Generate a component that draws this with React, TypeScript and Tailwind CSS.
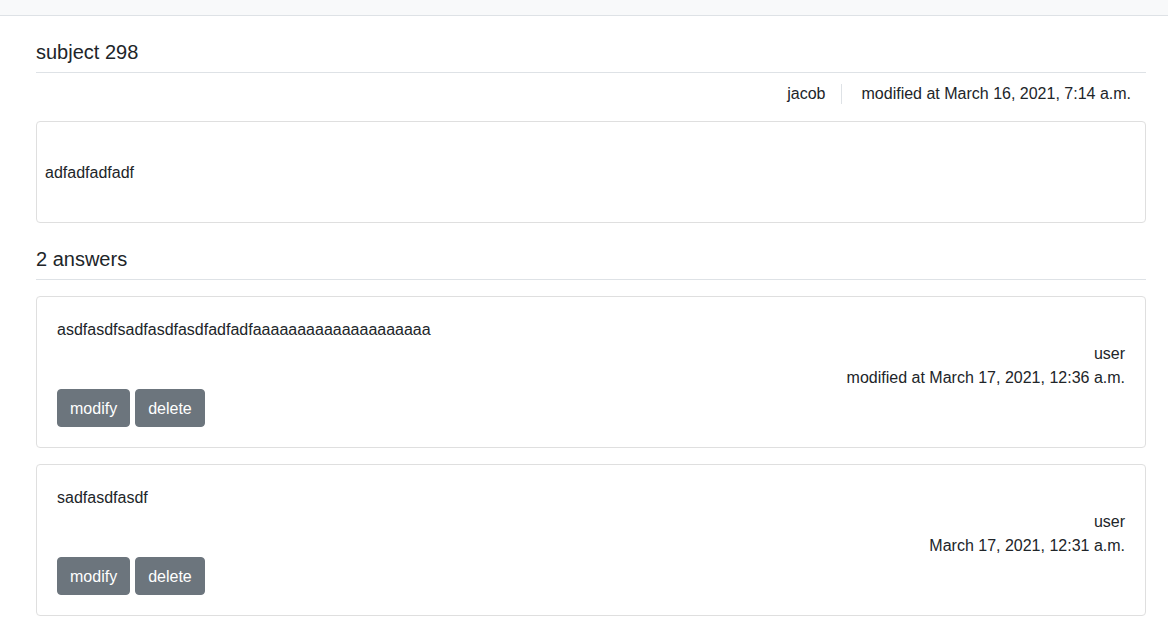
export default function App() {
  const answers = [
    { text: "asdfasdfsadfasdfasdfadfadfaaaaaaaaaaaaaaaaaaaa", user: "user", date: "modified at March 17, 2021, 12:36 a.m." },
    { text: "sadfasdfasdf", user: "user", date: "March 17, 2021, 12:31 a.m." },
  ];
  return (
    <div className="min-h-[628px] bg-white text-[#212529] text-[16px] leading-[24px]" style={{ fontFamily: '"Liberation Sans", Arial, sans-serif' }}>
      <div className="h-[16px] bg-[#f8f9fa] border-b border-[#dee2e6]" />
      <div className="ml-[36px] w-[1110px] mt-[16px]">
        <h5 className="text-[20px] leading-[24px] pt-[8px] pb-[8px] border-b border-[#dee2e6]">subject 298</h5>
        <div className="flex justify-end items-center mt-[9px] pr-[15px] h-[24px]">
          <span className="pr-[15px]">jacob</span>
          <span className="border-l border-[#dee2e6] pl-[20px] h-[20px] flex items-center">modified at March 16, 2021, 7:14 a.m.</span>
        </div>
        <div className="mt-[15px] border border-[#dfdfdf] rounded-[4px] h-[102px] flex items-center px-[8px] pt-[1px]">
          adfadfadfadf
        </div>
        <h5 className="text-[20px] leading-[24px] mt-[16px] pt-[8px] pb-[8px] border-b border-[#dee2e6]">2 answers</h5>
        <div className="mt-[16px] flex flex-col gap-[16px]">
          {answers.map((a, i) => (
            <div key={i} className="border border-[#dfdfdf] rounded-[4px] px-[20px] pt-[21px] pb-[20px]">
              <div>{a.text}</div>
              <div className="text-right">{a.user}</div>
              <div className="text-right">{a.date}</div>
              <div className="flex gap-[5px] -mt-[1px]">
                <button className="bg-[#6c757d] text-white border border-[#6c757d] rounded-[4px] px-[12px] pt-[7px] pb-[5px] leading-[24px]">modify</button>
                <button className="bg-[#6c757d] text-white border border-[#6c757d] rounded-[4px] px-[12px] pt-[7px] pb-[5px] leading-[24px]">delete</button>
              </div>
            </div>
          ))}
        </div>
      </div>
    </div>
  );
}
